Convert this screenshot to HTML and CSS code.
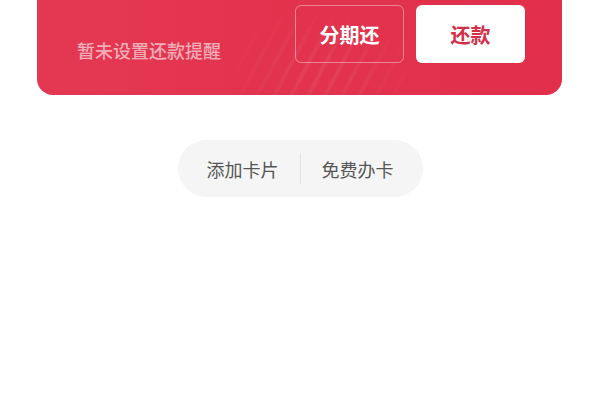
FILE: index.html
```html
<!DOCTYPE html>
<html lang="zh">
<head>
<meta charset="utf-8">
<link rel="stylesheet" href="styles.css">
</head>
<body>
<div class="page">
  <div class="card">
    <div class="remind">暂未设置还款提醒</div>
    <div class="actions">
      <button class="btn btn-ghost">分期还</button>
      <button class="btn btn-solid">还款</button>
    </div>
  </div>
  <div class="pill-wrap">
    <div class="pill">
      <span class="pill-item">添加卡片</span>
      <span class="pill-divider"></span>
      <span class="pill-item">免费办卡</span>
    </div>
  </div>
</div>
</body>
</html>
```
FILE: styles.css
```css
html, body {
  margin: 0;
  padding: 0;
  background: #ffffff;
  font-family: "Noto Sans CJK SC", "Noto Sans", sans-serif;
}
.page {
  padding: 0 38px 0 37px;
}
.card {
  position: relative;
  overflow: hidden;
  height: 95px;
  box-sizing: border-box;
  border-radius: 0 0 16px 16px;
  background: linear-gradient(90deg, #e43852 0%, #e2324d 60%, #e12f4b 100%);
  display: flex;
  justify-content: space-between;
  align-items: flex-start;
  padding: 5px 37px 0 40px;
}
.card::before {
  content: "";
  position: absolute;
  left: 200px;
  top: 0;
  width: 170px;
  height: 100%;
  background: repeating-linear-gradient(-62deg, rgba(255,255,255,0) 0px, rgba(255,255,255,0) 9px, rgba(255,255,255,0.06) 11px, rgba(255,255,255,0.06) 13px, rgba(255,255,255,0) 15px);
  -webkit-mask-image: radial-gradient(ellipse 60% 70% at 50% 75%, #000 20%, transparent 100%);
  mask-image: radial-gradient(ellipse 60% 70% at 50% 75%, #000 20%, transparent 100%);
  pointer-events: none;
}
.remind {
  position: relative;
  margin-top: 32px;
  font-size: 18px;
  line-height: 26px;
  font-weight: 500;
  color: rgba(255, 255, 255, 0.6);
}
.actions {
  position: relative;
  display: flex;
  gap: 12px;
}
.btn {
  width: 109px;
  height: 58px;
  border-radius: 6px;
  font-family: inherit;
  font-size: 20px;
  font-weight: 700;
  padding: 0;
  cursor: pointer;
}
.btn-ghost {
  background: transparent;
  border: 1px solid rgba(255, 255, 255, 0.4);
  color: #ffffff;
}
.btn-solid {
  background: #ffffff;
  border: none;
  color: #d2304a;
}
.pill-wrap {
  display: flex;
  justify-content: center;
  margin-top: 45px;
  padding-left: 1px;
}
.pill {
  display: flex;
  align-items: center;
  height: 57px;
  padding: 0 29px;
  border-radius: 29px;
  background: #f5f5f5;
}
.pill-item {
  font-size: 18px;
  color: #555555;
  line-height: 24px;
}
.pill-divider {
  width: 1px;
  height: 31px;
  background: #e2e2e2;
  margin: 0 21px;
}
```
